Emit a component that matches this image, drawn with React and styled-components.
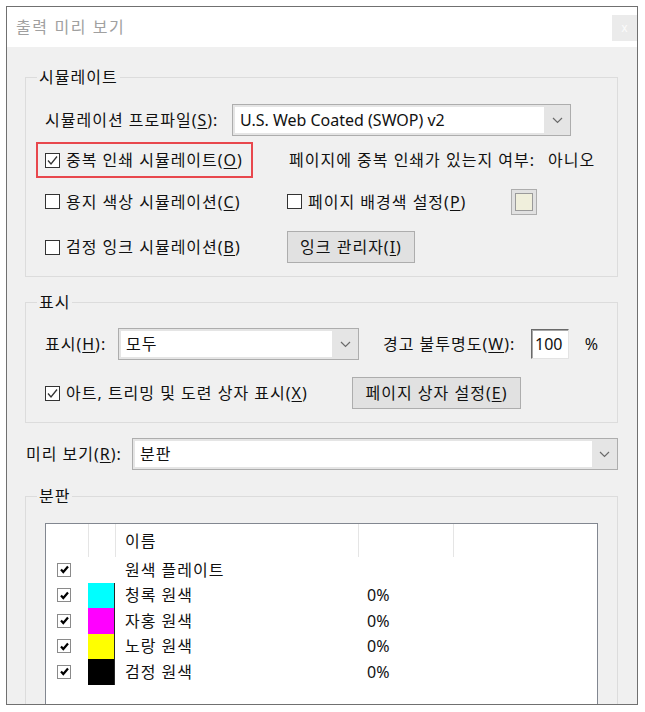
import React from 'react';
import styled, { createGlobalStyle } from 'styled-components';

const Global = createGlobalStyle`
  html, body { margin: 0; padding: 0; background: #fff; }
  body {
    font-family: "Noto Sans", "Noto Sans CJK KR", sans-serif;
    font-size: 16px;
    line-height: 20px;
    letter-spacing: 1px;
    color: #111;
  }
  * { box-sizing: border-box; }
  u { text-underline-offset: 2px; text-decoration-thickness: 1px; }
`;

const Window = styled.div`
  margin: 6px 0 0 6px;
  width: 632px;
  height: 699px;
  border: 1px solid #707070;
  background: #f0f0f0;
  overflow: hidden;
  display: flex;
  flex-direction: column;
`;

const TitleBar = styled.div`
  flex: none;
  height: 40px;
  background: #fff;
  display: flex;
  align-items: center;
  padding-left: 9px;
`;

const Title = styled.div`
  color: #a0a0a0;
  letter-spacing: 1.6px;
`;

const CloseBtn = styled.div`
  margin-left: auto;
  align-self: flex-start;
  margin-top: 8px;
  width: 25px;
  height: 26px;
  background: #ebebeb;
  color: #fbfbfb;
  font-family: "Liberation Sans", sans-serif;
  font-size: 12px;
  letter-spacing: 0;
  display: flex;
  align-items: center;
  justify-content: center;
`;

const Body = styled.div`
  flex: 1;
  min-height: 0;
  padding: 30px 19px 0 18px;
  display: flex;
  flex-direction: column;
`;

const Group = styled.div`
  flex: none;
  border: 1px solid #dcdcdc;
  display: flex;
  flex-direction: column;
  margin-top: ${p => p.$mt || 0}px;
  padding: 0 19px ${p => (p.$pb === undefined ? 13 : p.$pb)}px 19px;
`;

const Legend = styled.div`
  align-self: flex-start;
  margin: -11px 0 0 -8px;
  padding: 0 2px;
  height: 20px;
  line-height: 20px;
  background: #f0f0f0;
`;

const Row = styled.div`
  flex: none;
  display: flex;
  align-items: center;
  height: ${p => p.$h}px;
  margin-top: ${p => p.$mt || 0}px;
  white-space: nowrap;
`;

const Cell = styled.div`
  flex: none;
  width: ${p => p.$w}px;
  margin-left: ${p => p.$ml || 0}px;
  padding-left: ${p => p.$pl || 0}px;
  display: flex;
  align-items: center;
`;

const Label = styled.span`
  white-space: nowrap;
  margin-left: ${p => p.$ml || 0}px;
`;

const Latin = styled.span`
  letter-spacing: 0;
`;

const Highlight = styled.div`
  height: 36px;
  margin-left: -9px;
  padding: 0 8px 0 7px;
  border: 2px solid #e8474d;
  display: flex;
  align-items: center;
`;

const InfoValue = styled.span`
  margin-left: 13px;
`;

const CheckWrap = styled.label`
  display: flex;
  align-items: center;
  gap: 6px;
  white-space: nowrap;
`;

const Box = styled.span`
  width: 15px;
  height: 15px;
  flex: none;
  background: #fff;
  border: 1px solid #333;
  display: flex;
  align-items: center;
  justify-content: center;
`;

const SelectBox = styled.div`
  display: flex;
  height: 32px;
  width: ${p => (p.$w ? `${p.$w}px` : 'auto')};
  flex: ${p => (p.$w ? 'none' : '1')};
  border: 1px solid #adadad;
  background: #e5e5e5;
  padding: 2px 0 2px 2px;
`;

const SelectField = styled.div`
  flex: 1;
  background: #fff;
  display: flex;
  align-items: center;
  padding-left: 5px;
  white-space: nowrap;
`;

const SelectArrow = styled.div`
  width: ${p => p.$aw}px;
  flex: none;
  display: flex;
  align-items: center;
  justify-content: center;
`;

const Button = styled.div`
  flex: none;
  width: ${p => p.$w}px;
  height: 32px;
  background: #e1e1e1;
  border: 1px solid #adadad;
  display: flex;
  align-items: center;
  justify-content: center;
  white-space: nowrap;
`;

const Swatch = styled.div`
  width: 26px;
  height: 26px;
  border: 1px solid #adadad;
  background: #e1e1e1;
  padding: 3px;
  display: flex;
`;

const SwatchInner = styled.div`
  flex: 1;
  border: 1px solid #9a9a9a;
  background: #f0efdc;
`;

const NumInput = styled.div`
  width: 40px;
  height: 30px;
  background: #fff;
  border: 1px solid;
  border-color: #6a6a6a #e3e3e3 #e3e3e3 #6a6a6a;
  box-shadow: inset 1px 1px 0 #a8a8a8;
  padding-left: 3px;
  letter-spacing: 0;
  display: flex;
  align-items: center;
`;

const Percent = styled.span`
  margin-left: 16px;
  letter-spacing: 0;
`;

const List = styled.div`
  flex: none;
  margin-top: 17px;
  height: 260px;
  border: 1px solid #828790;
  background: #fff;
`;

const ListRow = styled.div`
  display: grid;
  grid-template-columns: 42px 27px 243px 95px 1fr;
  height: ${p => p.$h}px;
`;

const HeadCell = styled.div`
  display: flex;
  align-items: center;
  padding-left: 9px;
  border-left: ${p => (p.$first ? 'none' : '1px solid #e5e5e5')};
`;

const ListCell = styled.div`
  display: flex;
  align-items: center;
  padding-left: ${p => p.$pl || 0}px;
  white-space: nowrap;
  letter-spacing: ${p => (p.$latin ? 0 : 1)}px;
`;

const ColorCell = styled.div`
  background: ${p => p.$c || 'transparent'};
  border-right: ${p => (p.$c ? '1px solid #262626' : 'none')};
`;

const SmallBox = styled.span`
  width: 14px;
  height: 14px;
  border: 1px solid #8a8a8a;
  background: #fff;
  display: flex;
  align-items: center;
  justify-content: center;
`;

const Chevron = () => (
  <svg width="11" height="7" viewBox="0 0 11 7">
    <polyline points="1,1 5.5,5.5 10,1" fill="none" stroke="#6a6a6a" strokeWidth="1.2" />
  </svg>
);

const Select = ({ w, aw = 26, children }) => (
  <SelectBox $w={w}>
    <SelectField>{children}</SelectField>
    <SelectArrow $aw={aw}>
      <Chevron />
    </SelectArrow>
  </SelectBox>
);

const Checkbox = ({ checked, children }) => (
  <CheckWrap>
    <Box>
      {checked && (
        <svg width="13" height="13" viewBox="0 0 13 13">
          <polyline points="2,6.5 5,10 11,2.5" fill="none" stroke="#333" strokeWidth="1.3" />
        </svg>
      )}
    </Box>
    <Label>{children}</Label>
  </CheckWrap>
);

const ListCheck = () => (
  <SmallBox>
    <svg width="11" height="11" viewBox="0 0 11 11">
      <polyline points="2,5.5 4.3,8 9,2.5" fill="none" stroke="#000" strokeWidth="2.2" />
    </svg>
  </SmallBox>
);

const plates = [
  { name: '원색 플레이트', color: null, pct: '' },
  { name: '청록 원색', color: '#00ffff', pct: '0%' },
  { name: '자홍 원색', color: '#ff00ff', pct: '0%' },
  { name: '노랑 원색', color: '#ffff00', pct: '0%' },
  { name: '검정 원색', color: '#000000', pct: '0%' },
];

export default function App() {
  return (
    <>
      <Global />
      <Window>
        <TitleBar>
          <Title>출력 미리 보기</Title>
          <CloseBtn>x</CloseBtn>
        </TitleBar>
        <Body>
          <Group>
            <Legend>시뮬레이트</Legend>
            <Row $h={32} $mt={17}>
              <Cell $w={187}>
                <Label>시뮬레이션 프로파일(<u>S</u>):</Label>
              </Cell>
              <Select w={339}>
                <Latin>U.S. Web Coated (SWOP) v2</Latin>
              </Select>
            </Row>
            <Row $h={36} $mt={6}>
              <Cell $w={242}>
                <Highlight>
                  <Checkbox checked>중복 인쇄 시뮬레이트(<u>O</u>)</Checkbox>
                </Highlight>
              </Cell>
              <Label $ml={2}>페이지에 중복 인쇄가 있는지 여부:</Label>
              <InfoValue>아니오</InfoValue>
            </Row>
            <Row $h={27} $mt={10}>
              <Cell $w={242}>
                <Checkbox>용지 색상 시뮬레이션(<u>C</u>)</Checkbox>
              </Cell>
              <Cell $w={224}>
                <Checkbox>페이지 배경색 설정(<u>P</u>)</Checkbox>
              </Cell>
              <Swatch>
                <SwatchInner />
              </Swatch>
            </Row>
            <Row $h={32} $mt={16}>
              <Cell $w={242}>
                <Checkbox>검정 잉크 시뮬레이션(<u>B</u>)</Checkbox>
              </Cell>
              <Button $w={128}>
                잉크 관리자(<u>I</u>)
              </Button>
            </Row>
          </Group>

          <Group $mt={25}>
            <Legend>표시</Legend>
            <Row $h={32} $mt={16}>
              <Cell $w={73}>
                <Label>표시(<u>H</u>):</Label>
              </Cell>
              <Select w={241}>모두</Select>
              <Cell $w={148} $ml={24}>
                <Label>경고 불투명도(<u>W</u>):</Label>
              </Cell>
              <NumInput>100</NumInput>
              <Percent>%</Percent>
            </Row>
            <Row $h={32} $mt={17}>
              <Cell $w={307}>
                <Checkbox checked>아트, 트리밍 및 도련 상자 표시(<u>X</u>)</Checkbox>
              </Cell>
              <Button $w={169}>
                페이지 상자 설정(<u>E</u>)
              </Button>
            </Row>
          </Group>

          <Row $h={32} $mt={15}>
            <Cell $w={107} $pl={1}>
              <Label>미리 보기(<u>R</u>):</Label>
            </Cell>
            <Select aw={25}>분판</Select>
          </Row>

          <Group $mt={26} $pb={0}>
            <Legend>분판</Legend>
            <List>
              <ListRow $h={33}>
                <HeadCell $first />
                <HeadCell />
                <HeadCell>이름</HeadCell>
                <HeadCell />
                <HeadCell />
              </ListRow>
              {plates.map(p => (
                <ListRow key={p.name} $h={25.5}>
                  <ListCell $pl={11}>
                    <ListCheck />
                  </ListCell>
                  <ColorCell $c={p.color} />
                  <ListCell $pl={10}>{p.name}</ListCell>
                  <ListCell $pl={9} $latin>
                    {p.pct}
                  </ListCell>
                  <ListCell />
                </ListRow>
              ))}
            </List>
          </Group>
        </Body>
      </Window>
    </>
  );
}
